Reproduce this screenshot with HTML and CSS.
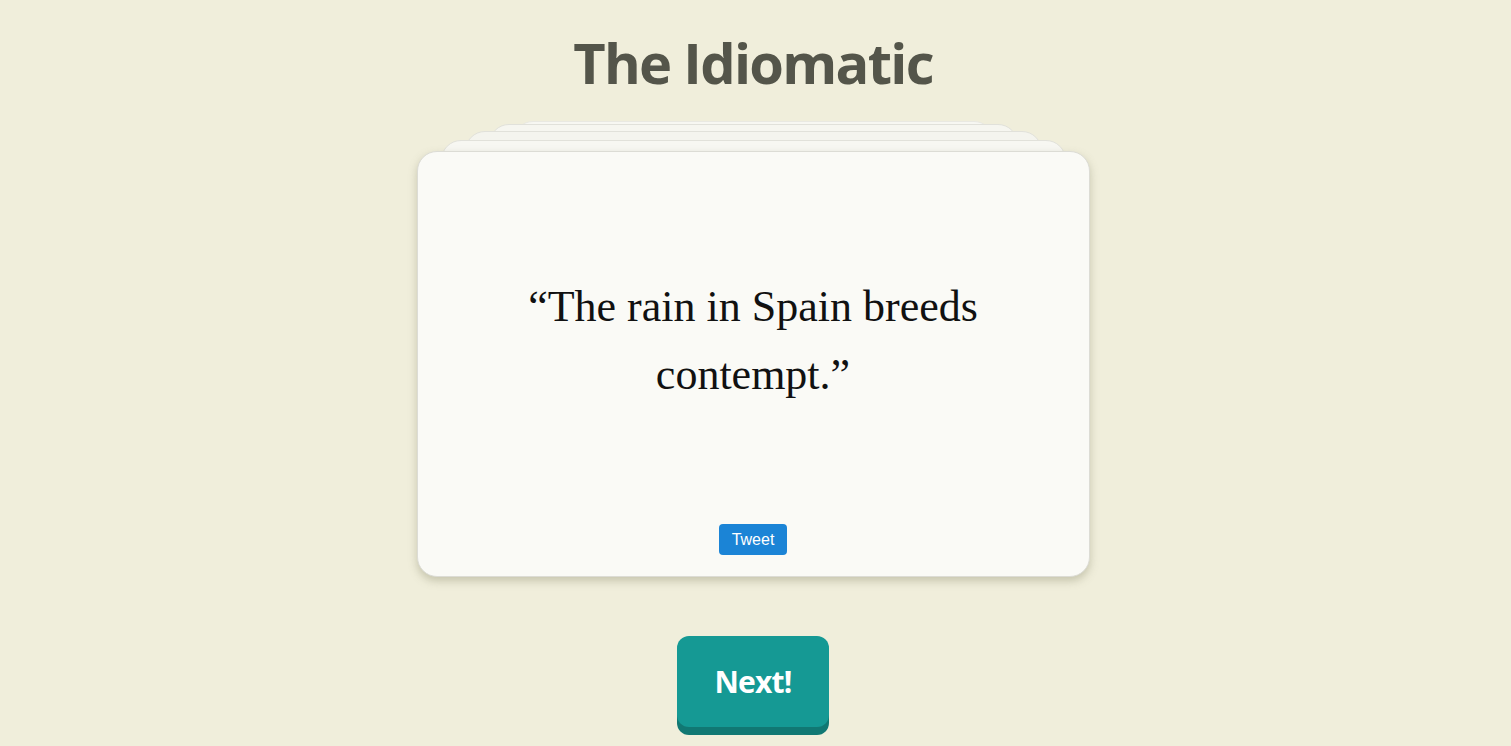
FILE: index.html
```html
<!DOCTYPE html>
<html>
<head>
<meta charset="utf-8">
<link rel="stylesheet" href="styles.css">
</head>
<body>
<main class="page">
  <h1 class="title">The Idiomatic</h1>
  <div class="stack">
    <div class="back back-4"></div>
    <div class="back back-3"></div>
    <div class="back back-2"></div>
    <div class="back back-1"></div>
    <div class="card">
      <div class="quote-wrap">
        <p class="quote">“The rain in Spain breeds contempt.”</p>
      </div>
      <a class="tweet">Tweet</a>
    </div>
  </div>
  <button class="next">Next!</button>
</main>
</body>
</html>
```
FILE: styles.css
```css
html, body {
  margin: 0;
  padding: 0;
  background: #f0eedb;
  height: 100%;
  overflow: hidden;
}
.page {
  display: flex;
  flex-direction: column;
  align-items: center;
  padding-right: 5px;
}
.title {
  margin: 26px 0 0 0;
  font-family: "Open Sans", sans-serif;
  font-weight: 700;
  font-size: 56px;
  line-height: 72px;
  letter-spacing: -1.7px;
  color: #54554a;
}
.stack {
  position: relative;
  margin-top: 53px;
  width: 673px;
}
.back {
  position: absolute;
  height: 300px;
  border: 1px solid #e1e1da;
  border-radius: 20px;
  background: #f7f7f1;
  box-sizing: border-box;
}
.back-1 { left: 24px; right: 24px; top: -11px; background: #f7f7f2; }
.back-2 { left: 48px; right: 48px; top: -20px; background: #f4f4ee; }
.back-3 { left: 72px; right: 72px; top: -27px; background: #f6f6f0; }
.back-4 { left: 96px; right: 96px; top: -30px; background: #f7f7f2; border-color: #e9e9e2; }
.card {
  position: relative;
  box-sizing: border-box;
  height: 426px;
  background: #fafaf6;
  border: 1px solid #dcdcd5;
  border-radius: 20px;
  box-shadow: 0 4px 8px rgba(120, 120, 90, 0.35);
  display: flex;
  flex-direction: column;
  align-items: center;
  padding-bottom: 21px;
}
.quote-wrap {
  flex: 1;
  display: flex;
  align-items: center;
  justify-content: center;
  padding-top: 6px;
}
.quote {
  margin: 0;
  font-family: "Liberation Serif", serif;
  font-size: 44px;
  line-height: 68px;
  text-align: center;
  color: #111;
  width: 520px;
}
.tweet {
  display: inline-block;
  background: #1b84d6;
  color: #fff;
  font-family: "Liberation Sans", sans-serif;
  font-size: 16px;
  line-height: 31px;
  padding: 0 13px;
  border-radius: 4px;
}
.next {
  margin-top: 59px;
  width: 152px;
  height: 91px;
  border: none;
  border-radius: 12px;
  background: #159994;
  box-shadow: 0 8px 0 #117873;
  color: #fff;
  font-family: "Open Sans", sans-serif;
  font-weight: 700;
  font-size: 30px;
  letter-spacing: -0.8px;
  padding: 0;
}
```
